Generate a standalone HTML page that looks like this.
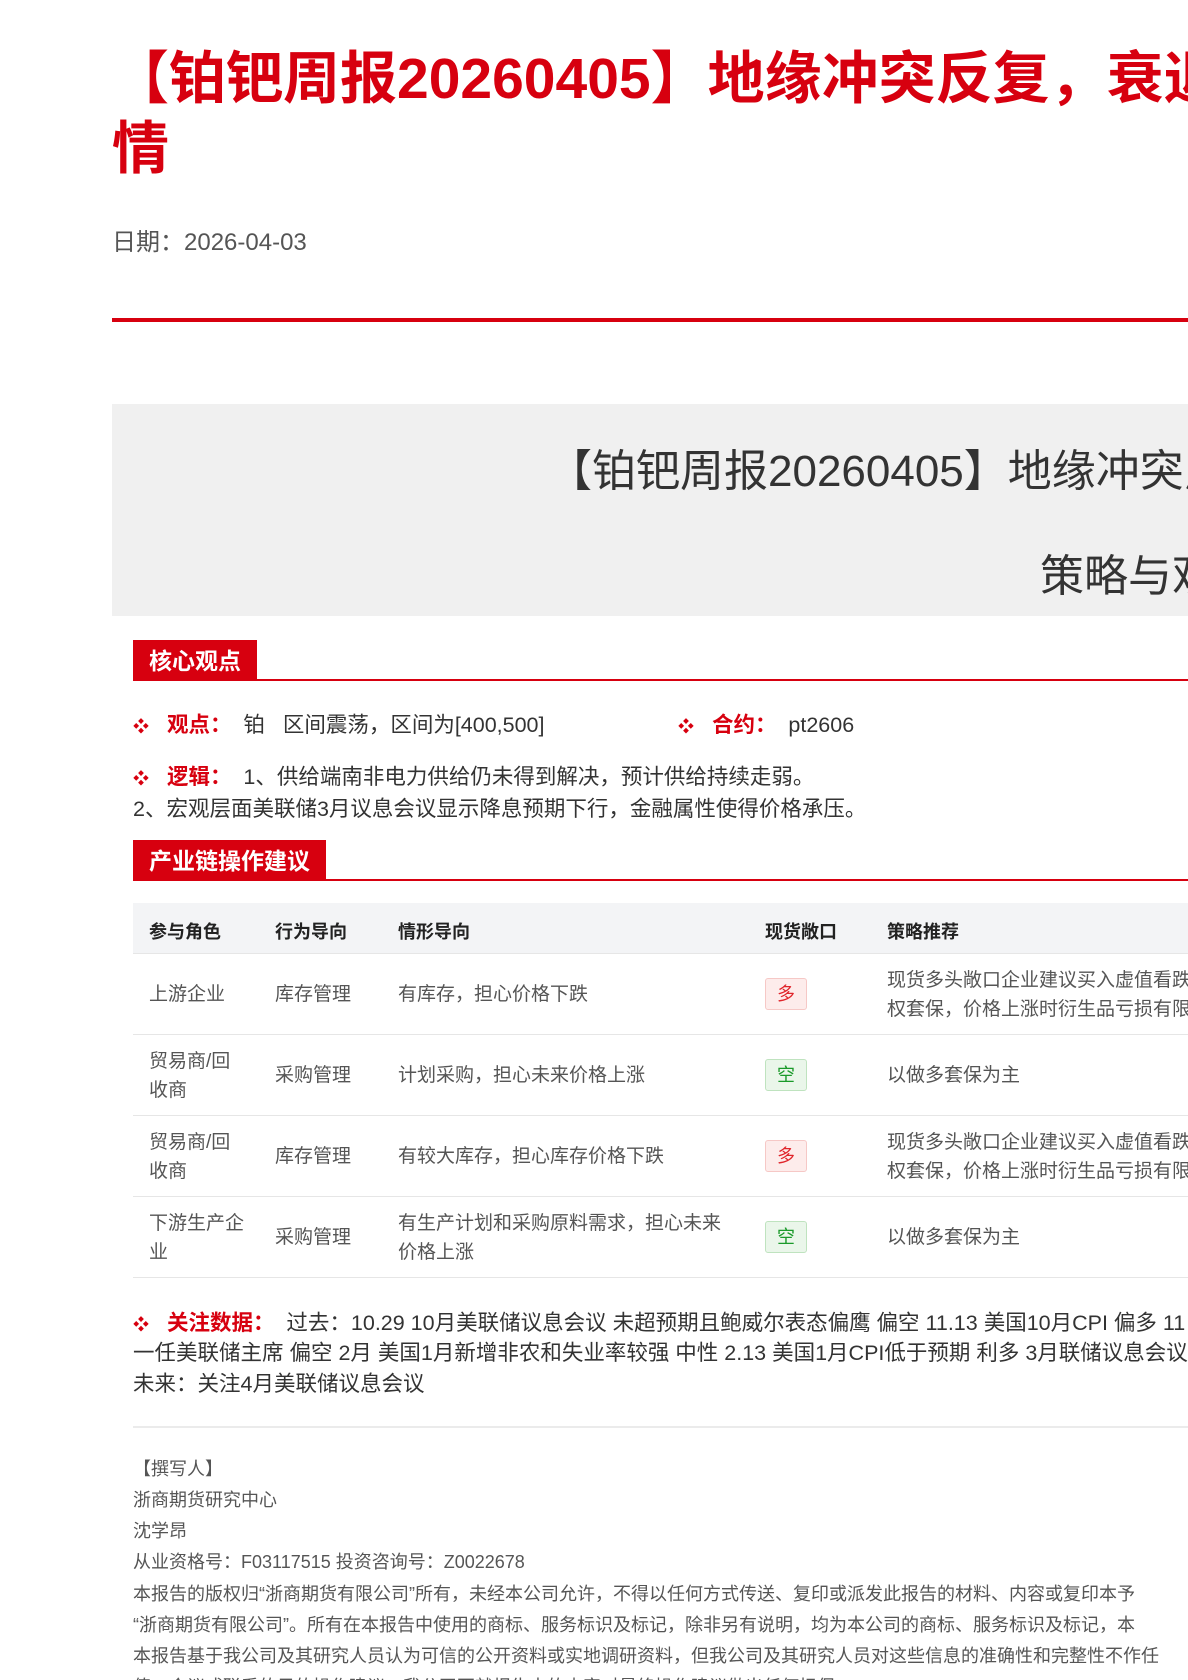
<!DOCTYPE html>
<html><head><meta charset="utf-8"><style>
html,body{margin:0;padding:0;width:1188px;height:1680px;overflow:hidden;background:#fff;font-family:"Liberation Sans","Noto Sans CJK SC",sans-serif;}
#wrap{position:relative;width:1188px;height:1680px;overflow:hidden;}
.abs{position:absolute;white-space:nowrap;}
.title{color:#d7000f;font-weight:bold;font-size:57px;left:112px;line-height:70px;}
.red{color:#d7000f}
.hdr{position:absolute;left:133px;height:40px;background:#d7000f;color:#fff;font-size:23px;font-weight:bold;line-height:42px;padding:0 16px;}
.hline{position:absolute;left:133px;right:0;height:2px;background:#d7000f;}
.dot{color:#d7000f;font-size:16px;}
.t{font-size:21.5px;color:#333;}
.tag{position:absolute;width:40px;height:30px;border-radius:3px;font-size:18px;text-align:center;line-height:30px;}
.duo{background:#fdeceb;border:1px solid #f6c8c6;color:#e0252b;}
.kong{background:#eaf6ea;border:1px solid #bfe3bf;color:#1a9a2a;}
.cell{position:absolute;font-size:19px;color:#555;line-height:29px;}
.th{position:absolute;font-size:18px;font-weight:bold;color:#222;}
.row{position:absolute;left:133px;right:0;height:1px;background:#e6e6e6;}
.ft{position:absolute;left:133px;font-size:18px;color:#555;white-space:nowrap;}
</style></head><body><div id="wrap">
<div class="abs title" style="top:44px">【铂钯周报20260405】地缘冲突反复，衰退交易主导行</div>
<div class="abs title" style="top:114px">情</div>
<div class="abs" style="left:112px;top:222px;font-size:24px;color:#555">日期：2026-04-03</div>
<div style="position:absolute;left:112px;right:0;top:318px;height:4px;background:#d7000f"></div>
<div style="position:absolute;left:112px;right:0;top:404px;height:212px;background:#f0f0f0"></div>
<div class="abs" style="left:548px;top:435px;font-size:44px;color:#333">【铂钯周报20260405】地缘冲突反复，衰退交易主导行情</div>
<div class="abs" style="left:1040px;top:540px;font-size:44px;color:#333">策略与观点</div>

<div class="hdr" style="top:640px">核心观点</div>
<div class="hline" style="top:679px"></div>
<div class="abs t" style="left:133px;top:708px"><span class="dot">❖</span>&nbsp;&nbsp;&nbsp;<b class="red">观点：</b>&nbsp;&nbsp;铂&nbsp;&nbsp;&nbsp;区间震荡，区间为[400,500]</div>
<div class="abs t" style="left:678px;top:708px"><span class="dot">❖</span>&nbsp;&nbsp;&nbsp;<b class="red">合约：</b>&nbsp;&nbsp;pt2606</div>
<div class="abs t" style="left:133px;top:760px"><span class="dot">❖</span>&nbsp;&nbsp;&nbsp;<b class="red">逻辑：</b>&nbsp;&nbsp;1、供给端南非电力供给仍未得到解决，预计供给持续走弱。</div>
<div class="abs t" style="left:133px;top:792px">2、宏观层面美联储3月议息会议显示降息预期下行，金融属性使得价格承压。</div>

<div class="hdr" style="top:840px">产业链操作建议</div>
<div class="hline" style="top:879px"></div>
<div style="position:absolute;left:133px;right:0;top:903px;height:50px;background:#f3f4f6"></div>
<div class="th" style="left:149px;top:918px">参与角色</div>
<div class="th" style="left:275px;top:918px">行为导向</div>
<div class="th" style="left:398px;top:918px">情形导向</div>
<div class="th" style="left:765px;top:918px">现货敞口</div>
<div class="th" style="left:887px;top:918px">策略推荐</div>
<div class="row" style="top:953px"></div>
<div class="cell" style="left:149px;top:980px">上游企业</div>
<div class="cell" style="left:275px;top:980px">库存管理</div>
<div class="cell" style="left:398px;top:980px">有库存，担心价格下跌</div>
<div class="tag duo" style="left:765px;top:978px">多</div>
<div class="cell" style="left:887px;top:966px;white-space:nowrap">现货多头敞口企业建议买入虚值看跌期<br>权套保，价格上涨时衍生品亏损有限</div>
<div class="row" style="top:1034px"></div>
<div class="cell" style="left:149px;top:1047px">贸易商/回<br>收商</div>
<div class="cell" style="left:275px;top:1061px">采购管理</div>
<div class="cell" style="left:398px;top:1061px">计划采购，担心未来价格上涨</div>
<div class="tag kong" style="left:765px;top:1059px">空</div>
<div class="cell" style="left:887px;top:1061px">以做多套保为主</div>
<div class="row" style="top:1115px"></div>
<div class="cell" style="left:149px;top:1128px">贸易商/回<br>收商</div>
<div class="cell" style="left:275px;top:1142px">库存管理</div>
<div class="cell" style="left:398px;top:1142px">有较大库存，担心库存价格下跌</div>
<div class="tag duo" style="left:765px;top:1140px">多</div>
<div class="cell" style="left:887px;top:1128px;white-space:nowrap">现货多头敞口企业建议买入虚值看跌期<br>权套保，价格上涨时衍生品亏损有限</div>
<div class="row" style="top:1196px"></div>
<div class="cell" style="left:149px;top:1209px">下游生产企<br>业</div>
<div class="cell" style="left:275px;top:1223px">采购管理</div>
<div class="cell" style="left:398px;top:1209px">有生产计划和采购原料需求，担心未来<br>价格上涨</div>
<div class="tag kong" style="left:765px;top:1221px">空</div>
<div class="cell" style="left:887px;top:1223px">以做多套保为主</div>
<div class="row" style="top:1277px"></div>

<div class="abs t" style="left:133px;top:1306px"><span class="dot">❖</span>&nbsp;&nbsp;&nbsp;<b class="red">关注数据：</b>&nbsp;&nbsp;过去：10.29 10月美联储议息会议 未超预期且鲍威尔表态偏鹰 偏空 11.13 美国10月CPI 偏多 11</div>
<div class="abs t" style="left:133px;top:1336px">一任美联储主席 偏空 2月 美国1月新增非农和失业率较强 中性 2.13 美国1月CPI低于预期 利多 3月联储议息会议</div>
<div class="abs t" style="left:133px;top:1367px">未来：关注4月美联储议息会议</div>
<div style="position:absolute;left:133px;right:0;top:1426px;height:2px;background:#ebebeb"></div>
<div class="ft" style="top:1455px">【撰写人】</div>
<div class="ft" style="top:1486px">浙商期货研究中心</div>
<div class="ft" style="top:1517px">沈学昂</div>
<div class="ft" style="top:1548px">从业资格号：F03117515 投资咨询号：Z0022678</div>
<div class="ft" style="top:1580px">本报告的版权归“浙商期货有限公司”所有，未经本公司允许，不得以任何方式传送、复印或派发此报告的材料、内容或复印本予</div>
<div class="ft" style="top:1611px">“浙商期货有限公司”。所有在本报告中使用的商标、服务标识及标记，除非另有说明，均为本公司的商标、服务标识及标记，本</div>
<div class="ft" style="top:1642px">本报告基于我公司及其研究人员认为可信的公开资料或实地调研资料，但我公司及其研究人员对这些信息的准确性和完整性不作任</div>
<div class="ft" style="top:1673px">值，会议或联系的目的操作建议，我公司不就报告中的内容对最终操作建议做出任何担保</div>
</div></body></html>
